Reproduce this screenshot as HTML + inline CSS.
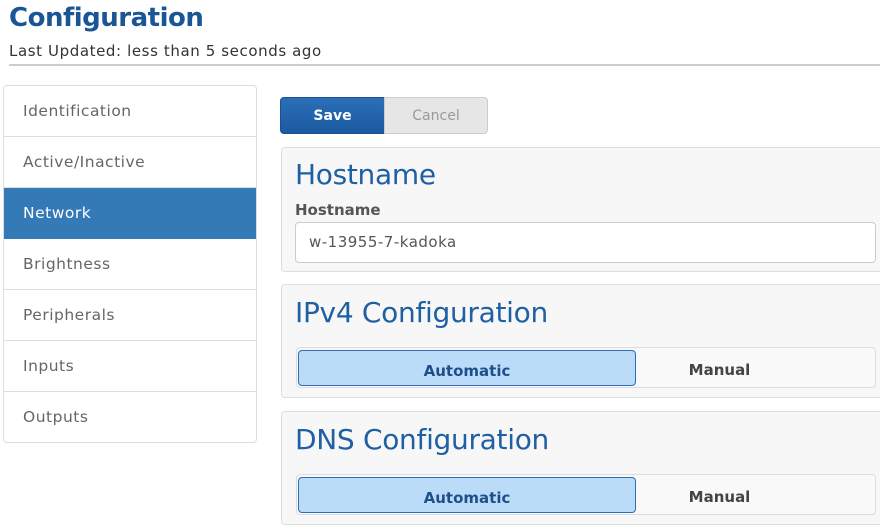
<!DOCTYPE html>
<html><head><style>
*{box-sizing:border-box;margin:0;padding:0}
body{width:880px;height:531px;overflow:hidden;background:#fff;font-family:"DejaVu Sans","Liberation Sans",sans-serif;position:relative}
.a{position:absolute}
h1{position:absolute;left:9px;top:3px;font-size:26px;font-weight:bold;color:#1a5596;letter-spacing:-0.5px}
.sub{left:9px;top:42px;font-size:15px;color:#333;letter-spacing:0.6px}
.hr{left:9px;top:64px;width:871px;height:2px;background:#ccc}
.side{left:3px;top:85px;width:254px;height:358px;border:1px solid #ddd;border-radius:4px;overflow:hidden}
.side div{height:51px;border-bottom:1px solid #ddd;padding-left:19px;line-height:50px;font-size:15.5px;color:#666;letter-spacing:0.5px}
.side div.on{background:#337ab7;color:#fff;border-color:#337ab7}
.btn{top:97px;height:37px;font-size:14px;font-weight:bold;text-align:center;line-height:36px}
.save{left:280px;width:105px;background:linear-gradient(#2a6fb8,#1c5aa0);color:#fff;border:1px solid #1a5090;border-radius:4px 0 0 4px}
.cancel{left:384px;width:104px;background:#e6e6e6;color:#999;border:1px solid #ccc;border-radius:0 4px 4px 0;font-weight:normal}
.panel{left:281px;width:610px;background:#f7f7f7;border:1px solid #ddd;border-radius:4px}
.h{position:absolute;left:13px;font-size:28px;color:#1f5fa3;letter-spacing:-0.3px}
.lbl{position:absolute;left:13px;top:53px;font-size:15px;font-weight:bold;color:#555}
.inp{position:absolute;left:13px;top:74px;width:581px;height:41px;background:#fff;border:1px solid #ccc;border-radius:4px;padding-left:13px;line-height:39px;font-size:15px;color:#555;letter-spacing:0.5px}
.seg{position:absolute;left:14px;width:580px;height:41px;border:1px solid #ddd;border-radius:4px;background:#f9f9f9}
.seg .on{position:absolute;left:1px;top:2px;width:338px;height:36px;background:#bbdcf9;border:1px solid #2e6db0;border-radius:4px;text-align:center;line-height:40px;font-weight:bold;font-size:15px;color:#1f4f8a}
.seg .off{position:absolute;left:340px;top:2px;width:165px;text-align:center;line-height:40px;font-weight:bold;font-size:15px;color:#444}
</style></head><body>
<h1>Configuration</h1>
<div class="a sub">Last Updated: less than 5 seconds ago</div>
<div class="a hr"></div>
<div class="a side">
<div>Identification</div><div>Active/Inactive</div><div class="on">Network</div><div>Brightness</div><div>Peripherals</div><div>Inputs</div><div style="border:0">Outputs</div>
</div>
<div class="a btn save">Save</div>
<div class="a btn cancel">Cancel</div>
<div class="a panel" style="top:147px;height:125px">
<div class="h" style="top:10px">Hostname</div>
<div class="lbl">Hostname</div>
<div class="inp">w-13955-7-kadoka</div>
</div>
<div class="a panel" style="top:284px;height:114px">
<div class="h" style="top:11px">IPv4 Configuration</div>
<div class="seg" style="top:62px"><div class="on">Automatic</div><div class="off">Manual</div></div>
</div>
<div class="a panel" style="top:411px;height:114px">
<div class="h" style="top:11px">DNS Configuration</div>
<div class="seg" style="top:62px"><div class="on">Automatic</div><div class="off">Manual</div></div>
</div>
</body></html>
